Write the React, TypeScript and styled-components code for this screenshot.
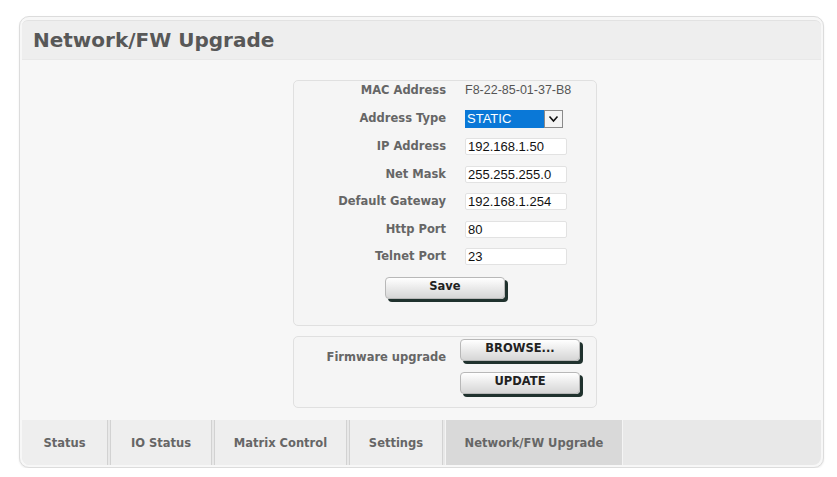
import styled, { createGlobalStyle } from "styled-components";

const GlobalStyle = createGlobalStyle`
  body {
    margin: 0;
    background: #ffffff;
    font-family: "DejaVu Sans", "Liberation Sans", sans-serif;
  }
`;

const Panel = styled.div`
  margin: 16px 0 0 19px;
  width: 805px;
  height: 452px;
  border: 1px solid #dcdcdc;
  border-radius: 10px;
  background: #f7f7f7;
  box-shadow: 0 1px 2px rgba(0, 0, 0, 0.08);
  display: flex;
  flex-direction: column;
  overflow: hidden;
  box-sizing: border-box;
  padding: 3px 2px 2px 2px;
`;

const Header = styled.div`
  height: 40px;
  background: #eeeeee;
  border-top: 1px solid #e2e2e2;
  border-bottom: 1px solid #e8e8e8;
  border-radius: 6px 6px 0 0;
  display: flex;
  align-items: center;
  padding-left: 11px;
  box-sizing: border-box;
`;

const Title = styled.h1`
  margin: 0;
  font-size: 20px;
  font-weight: bold;
  color: #585858;
`;

const Body = styled.div`
  flex: 1;
  display: flex;
  flex-direction: column;
  gap: 10px;
  padding: 20px 0 0 271px;
`;

const Box = styled.div`
  width: 304px;
  box-sizing: border-box;
  border: 1px solid #e0e0e0;
  border-radius: 5px;
  background: #f5f5f5;
`;

const FormGrid = styled.div`
  display: grid;
  grid-template-columns: 152px 1fr;
  column-gap: 19px;
  row-gap: 10.5px;
  align-items: center;
  padding: 1px 0 26px 0;
`;

const Label = styled.div`
  text-align: right;
  font-size: 11.5px;
  font-weight: bold;
  color: #666666;
  height: 17px;
  line-height: 17px;
`;

const MacValue = styled.div`
  font-family: "Liberation Sans", Arial, sans-serif;
  font-size: 12.5px;
  color: #555555;
  height: 17px;
  line-height: 17px;
`;

const TextInput = styled.input`
  width: 102px;
  height: 17px;
  box-sizing: border-box;
  border: 1px solid #e2e2e2;
  border-radius: 2px;
  background: #ffffff;
  padding: 0 2px;
  font-family: "Liberation Sans", Arial, sans-serif;
  font-size: 13px;
  color: #111111;
  outline: none;
`;

const Select = styled.div`
  display: flex;
  width: 100px;
  height: 18px;
`;

const SelectValue = styled.div`
  width: 79px;
  background: #0a78d7;
  color: #ffffff;
  font-family: "Liberation Sans", Arial, sans-serif;
  font-size: 13px;
  line-height: 18px;
  padding-left: 2px;
  box-sizing: border-box;
`;

const SelectArrow = styled.div`
  width: 19px;
  box-sizing: border-box;
  border: 1px solid #8a8a8a;
  background: #f4f4f4;
  display: flex;
  align-items: center;
  justify-content: center;
`;

const ButtonCell = styled.div`
  grid-column: 1 / span 2;
  display: flex;
  padding-left: 91px;
  margin-top: 1px;
`;

const Button = styled.button`
  width: 120px;
  height: 22px;
  border: 1px solid #b8b8b8;
  border-radius: 4px;
  background: linear-gradient(#ffffff, #e6e6e6 60%, #d6d6d6);
  box-shadow: 3px 3px 0 #20322e;
  font-family: "DejaVu Sans", "Liberation Sans", sans-serif;
  font-size: 11.5px;
  font-weight: bold;
  color: #222222;
  padding: 0 0 3px 0;
  cursor: pointer;
`;

const FirmwareRow = styled.div`
  display: grid;
  grid-template-columns: 152px 1fr;
  column-gap: 14px;
  padding: 2px 0 13px 0;
`;

const ButtonStack = styled.div`
  display: flex;
  flex-direction: column;
  gap: 11px;
`;

const FirmwareLabel = styled(Label)`
  margin-top: 10px;
`;

const TabBar = styled.div`
  height: 45px;
  display: flex;
  background: #e8e8e8;
  border-radius: 0 0 8px 8px;
  overflow: hidden;
`;

const Tab = styled.div<{ $width: number; $active?: boolean }>`
  width: ${(p) => p.$width}px;
  box-sizing: border-box;
  background: ${(p) => (p.$active ? "#d9d9d9" : "#eeeeee")};
  border-right: 1px solid ${(p) => (p.$active ? "#f4f4f4" : "#d2d2d2")};
  border-left: 1px solid ${(p) => (p.$active ? "#f4f4f4" : "#d2d2d2")};
  margin-right: 2px;
  display: flex;
  align-items: center;
  justify-content: center;
  font-size: 11.5px;
  font-weight: bold;
  color: #666666;
  &:first-child {
    border-left: none;
  }
`;

const Chevron = () => (
  <svg width="11" height="8" viewBox="0 0 11 8">
    <path d="M1.5 1.5 L5.5 6 L9.5 1.5" fill="none" stroke="#111" strokeWidth="1.6" />
  </svg>
);

const fields = [
  { label: "IP Address", value: "192.168.1.50" },
  { label: "Net Mask", value: "255.255.255.0" },
  { label: "Default Gateway", value: "192.168.1.254" },
  { label: "Http Port", value: "80" },
  { label: "Telnet Port", value: "23" },
];

const tabs = [
  { name: "Status", width: 86 },
  { name: "IO Status", width: 102 },
  { name: "Matrix Control", width: 133 },
  { name: "Settings", width: 94 },
  { name: "Network/FW Upgrade", width: 178, active: true },
];

export default function App() {
  return (
    <>
      <GlobalStyle />
      <Panel>
        <Header>
          <Title>Network/FW Upgrade</Title>
        </Header>
        <Body>
          <Box>
            <FormGrid>
              <Label>MAC Address</Label>
              <MacValue>F8-22-85-01-37-B8</MacValue>
              <Label>Address Type</Label>
              <Select>
                <SelectValue>STATIC</SelectValue>
                <SelectArrow>
                  <Chevron />
                </SelectArrow>
              </Select>
              {fields.map((f) => (
                <>
                  <Label key={f.label}>{f.label}</Label>
                  <TextInput key={f.label + "-in"} defaultValue={f.value} />
                </>
              ))}
              <ButtonCell>
                <Button>Save</Button>
              </ButtonCell>
            </FormGrid>
          </Box>
          <Box>
            <FirmwareRow>
              <FirmwareLabel>Firmware upgrade</FirmwareLabel>
              <ButtonStack>
                <Button>BROWSE...</Button>
                <Button>UPDATE</Button>
              </ButtonStack>
            </FirmwareRow>
          </Box>
        </Body>
        <TabBar>
          {tabs.map((t) => (
            <Tab key={t.name} $width={t.width} $active={t.active}>
              {t.name}
            </Tab>
          ))}
        </TabBar>
      </Panel>
    </>
  );
}
